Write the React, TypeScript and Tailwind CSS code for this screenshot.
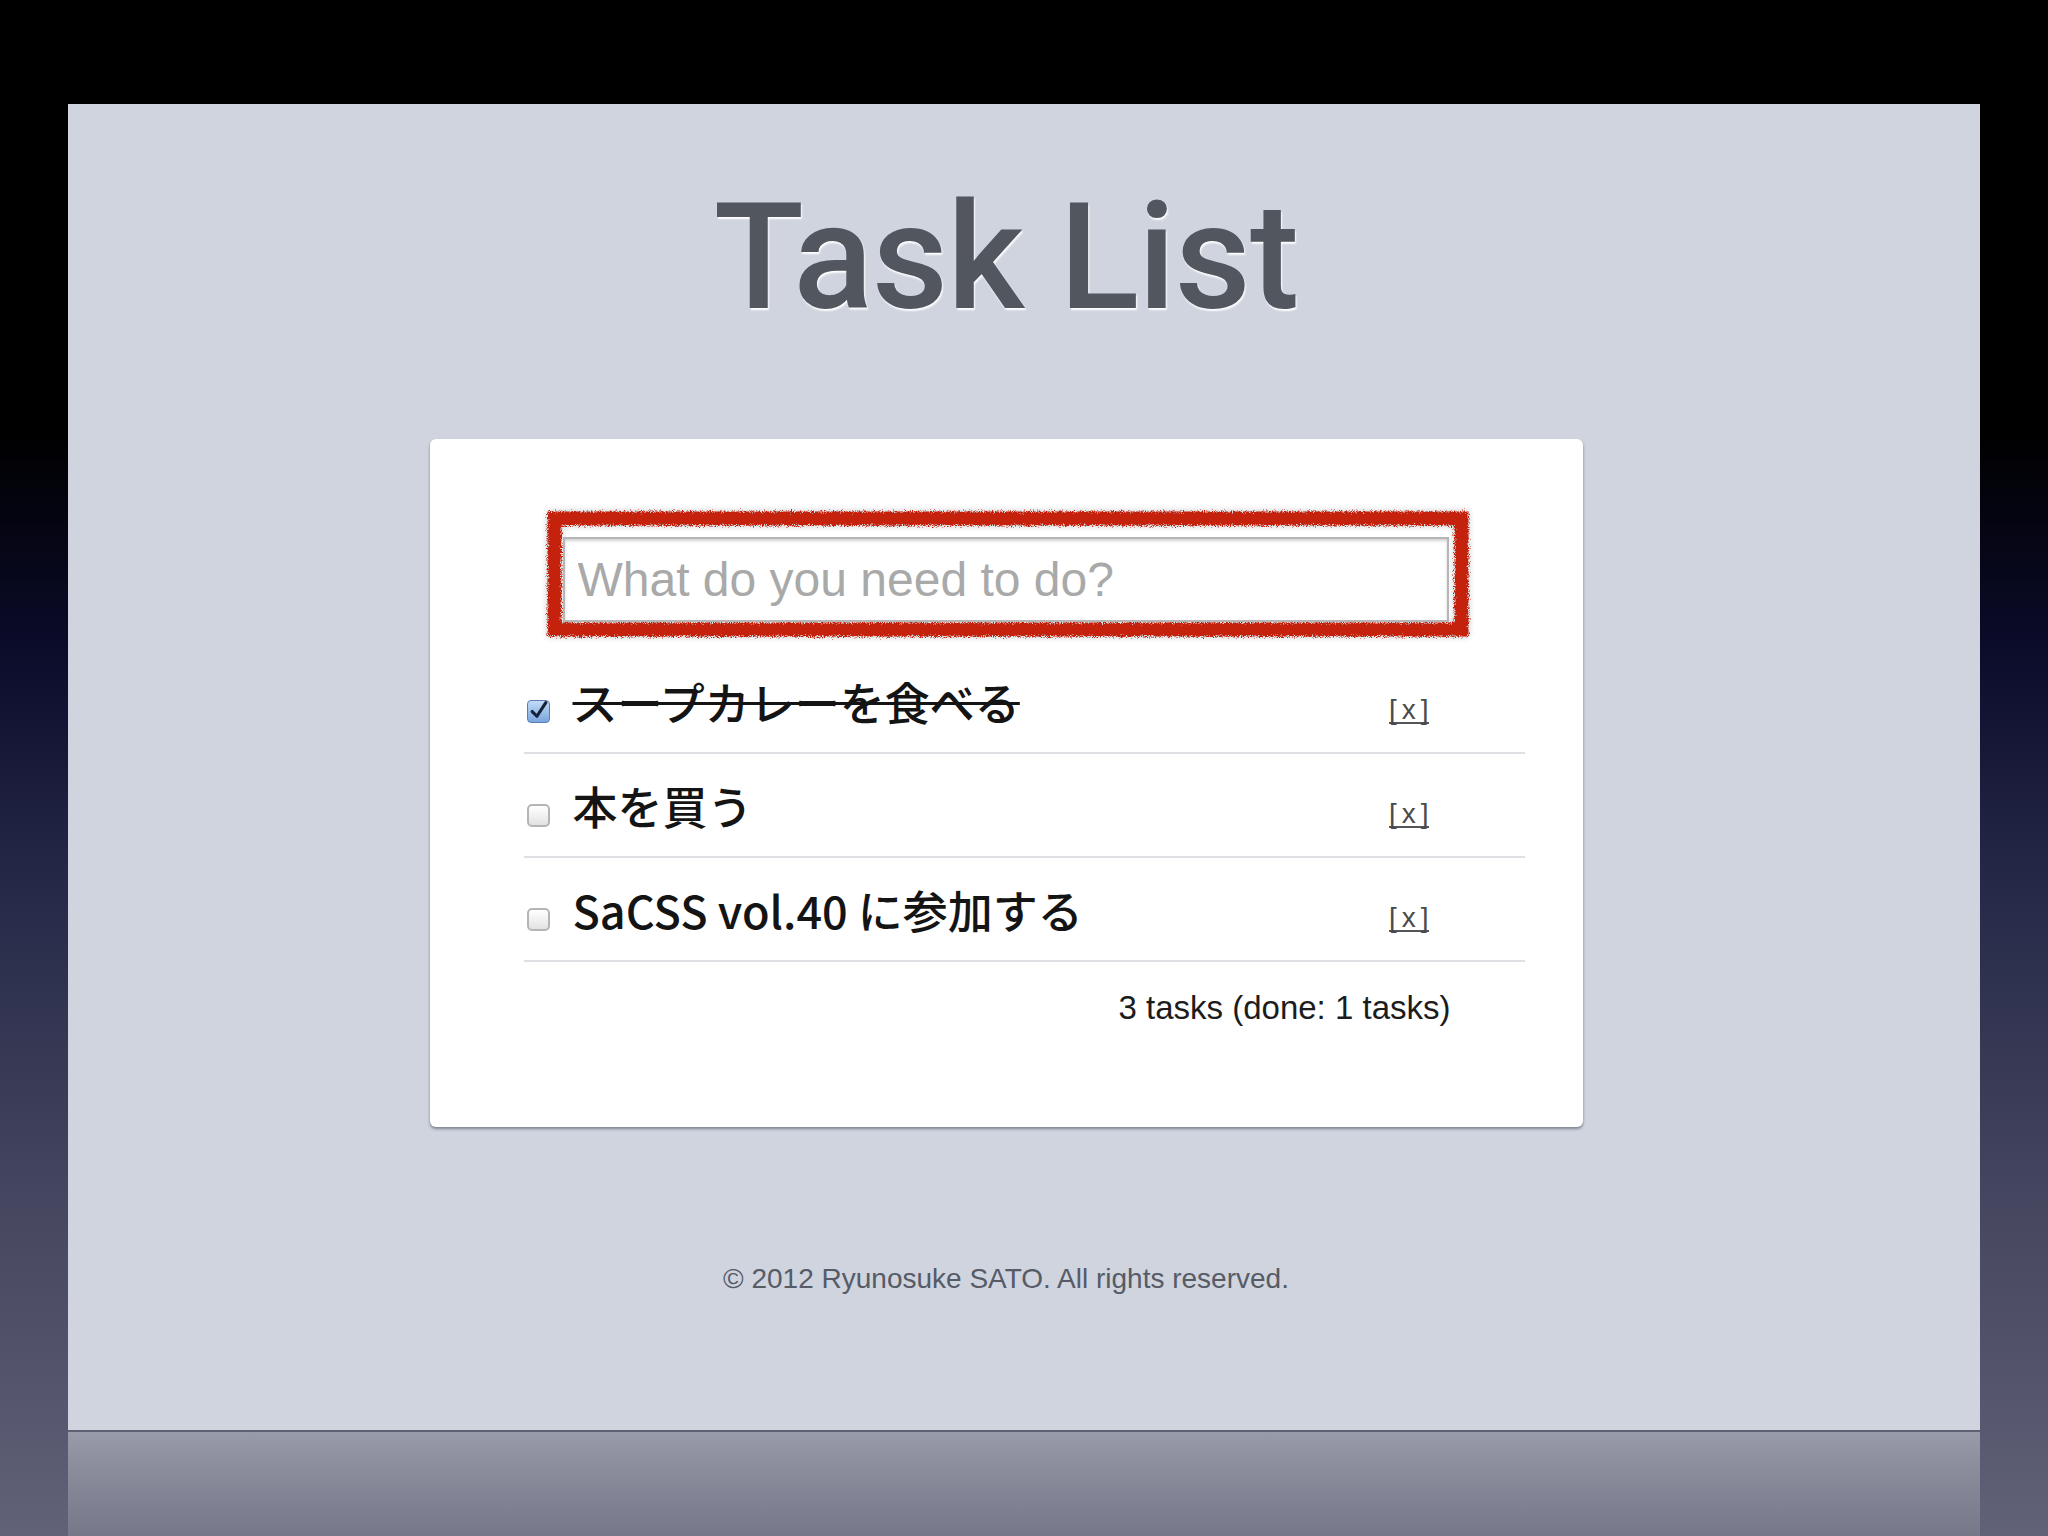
import React from "react";

type Task = {
  id: number;
  title: string;
  done: boolean;
};

const tasks: Task[] = [
  { id: 1, title: "スープカレーを食べる", done: true },
  { id: 2, title: "本を買う", done: false },
  { id: 3, title: "SaCSS vol.40 に参加する", done: false },
];

const jp = "font-['Noto_Sans_CJK_JP','Noto_Sans',sans-serif]";

// fake mac-style checkbox
const Check = ({ done }: { done: boolean }) =>
  done ? (
    <div className="mt-5 flex h-[23px] w-[23px] shrink-0 items-center justify-center rounded-[4px] border border-[#5a7fb5] bg-gradient-to-b from-[#c3dbf6] to-[#7aa6de]">
      <svg viewBox="0 0 20 20" className="h-[22px] w-[22px]">
        <path d="M4 10.5 L8.5 15 L17 2" fill="none" stroke="#16223a" strokeWidth="3" strokeLinecap="round" strokeLinejoin="round" />
      </svg>
    </div>
  ) : (
    <div className="mt-5 h-[23px] w-[23px] shrink-0 rounded-[5px] border-2 border-[#b5b5b5] bg-gradient-to-b from-[#ffffff] to-[#e3e3e3]" />
  );

const TaskRow = ({ task }: { task: Task }) => (
  <li className="flex h-[104px] items-center border-b-2 border-[#dfe0e3] pl-[3px] pr-[96px]">
    <Check done={task.done} />
    <span
      className={`ml-[23px] text-[45px] font-medium leading-none text-[#141414] ${jp} ${
        task.done ? "line-through decoration-[3px]" : ""
      }`}
    >
      {task.title}
    </span>
    <a className="ml-auto mt-5 inline-flex border-b-2 border-[#555] text-[28px] leading-[24px] text-[#4a4a4a] font-['Liberation_Sans',sans-serif]">
      [<span className="px-[5px]">x</span>]
    </a>
  </li>
);

export default function App() {
  const doneCount = tasks.filter((t) => t.done).length;

  return (
    <div className="flex h-[1536px] w-[2048px] flex-col overflow-hidden bg-[linear-gradient(to_bottom,#000000_0%,#000000_28%,#0b0b2a_42%,#262a48_58%,#45465f_78%,#616178_100%)] px-[68px] pt-[104px]">
      {/* slide */}
      <div className="flex h-[1326px] flex-col items-center bg-[#cfd4df] pr-[36px]">
        <h1 className="mt-[80px] h-[148px] text-[148px] font-medium leading-none tracking-[-1px] text-[#51565f] [text-shadow:1px_2px_2px_#ffffff] font-['Roboto',sans-serif]">
          Task List
        </h1>

        <div className="mt-[107px] flex h-[688px] w-[1153px] flex-col rounded-[6px] bg-white pt-[73px] shadow-[0_2px_3px_rgba(60,64,80,0.55)]">
          {/* highlighted input */}
          <div className="relative ml-[118px] w-[920px] pb-[14px] pl-[15px] pr-[19px] pt-[25px]">
            <svg className="pointer-events-none absolute inset-0 h-full w-full overflow-visible" viewBox="0 0 920 124" preserveAspectRatio="none">
              <defs>
                <filter id="rough" x="-5%" y="-20%" width="110%" height="140%">
                  <feTurbulence type="fractalNoise" baseFrequency="1.1" numOctaves="2" seed="3" />
                  <feDisplacementMap in="SourceGraphic" scale="8" xChannelSelector="R" yChannelSelector="G" />
                </filter>
                <filter id="shade" x="-5%" y="-20%" width="110%" height="140%">
                  <feGaussianBlur stdDeviation="3" />
                </filter>
              </defs>
              <rect x="6.5" y="6.5" width="907" height="111" fill="none" stroke="#8a8a8a" strokeWidth="14" filter="url(#shade)" opacity="0.55" />
              <rect x="6.5" y="6.5" width="907" height="111" fill="none" stroke="#c4200e" strokeWidth="14" filter="url(#rough)" />
            </svg>
            <input
              readOnly
              placeholder="What do you need to do?"
              className="relative h-[85px] w-[886px] border-2 border-[#b6b6b6] bg-white px-[13px] text-[48px] text-[#333] outline-none shadow-[inset_0_2px_3px_rgba(0,0,0,0.18)] placeholder:text-[#a9a9a9] font-['Liberation_Sans',sans-serif]"
            />
          </div>

          <ul className="ml-[94px] mt-[14px] w-[1001px]">
            {tasks.map((t) => (
              <TaskRow key={t.id} task={t} />
            ))}
          </ul>

          <div className="ml-[94px] mt-[26px] w-[1001px] pr-[74px] text-right text-[33px] leading-[40px] text-[#1c1c1c] font-['Liberation_Sans',sans-serif]">
            {tasks.length} tasks (done: {doneCount} tasks)
          </div>
        </div>

        <p className="mt-[138px] text-[28px] leading-none text-[#565b66] font-['Liberation_Sans',sans-serif]">
          © 2012 Ryunosuke SATO. All rights reserved.
        </p>
      </div>

      <div className="h-[2px] bg-[#5e6173]" />
      {/* reflection */}
      <div className="flex-1 bg-gradient-to-b from-[#989ba9] via-[#868797] to-[#767789]" />
    </div>
  );
}
